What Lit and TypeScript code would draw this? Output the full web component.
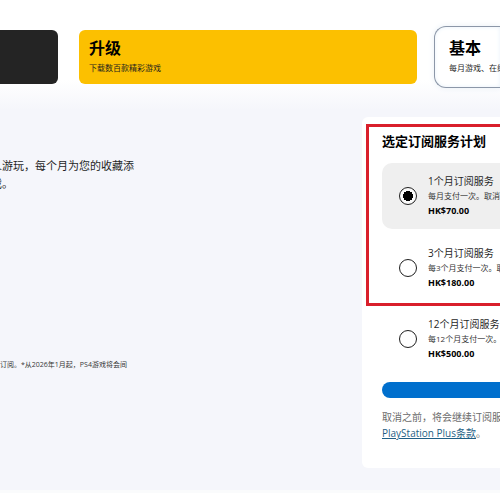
import { LitElement, html, css } from "lit";
import { customElement, property, state } from "lit/decorators.js";

interface Plan {
  id: string;
  title: string;
  note: string;
  price: string;
}

const PLANS: Plan[] = [
  { id: "m1", title: "1个月订阅服务", note: "每月支付一次。取消", price: "HK$70.00" },
  { id: "m3", title: "3个月订阅服务", note: "每3个月支付一次。取消", price: "HK$180.00" },
  { id: "m12", title: "12个月订阅服务", note: "每12个月支付一次。取消", price: "HK$500.00" },
];

@customElement("tier-card")
export class TierCard extends LitElement {
  @property() heading = "";
  @property() note = "";

  static styles = css`
    :host {
      display: block;
      box-sizing: border-box;
      height: 54px;
      padding: 8px 10px;
      border-radius: 6px;
      white-space: nowrap;
      overflow: hidden;
    }
    .heading {
      margin: 0;
      font-size: 16px;
      line-height: 20px;
      font-weight: 700;
      color: #000;
    }
    .note {
      margin: 0;
      padding-top: 2px;
      font-size: 8px;
      line-height: 16px;
      color: #1f1f1f;
    }
  `;

  render() {
    return html`<h2 class="heading">${this.heading}</h2>
      <p class="note">${this.note}</p>`;
  }
}

@customElement("plan-option")
export class PlanOption extends LitElement {
  @property({ attribute: false }) plan!: Plan;
  @property({ type: Boolean, reflect: true }) selected = false;

  static styles = css`
    :host {
      display: block;
      border-radius: 10px 0 0 10px;
    }
    :host([selected]) {
      background: #efefef;
    }
    .row {
      display: flex;
      align-items: center;
      gap: 11px;
      padding: 10px 0 10px 17px;
      white-space: nowrap;
      cursor: pointer;
    }
    .radio {
      appearance: none;
      flex: none;
      width: 18px;
      height: 18px;
      margin: 0;
      border: 1px solid #1f1f1f;
      border-radius: 50%;
      background: #fff;
    }
    .radio:checked {
      background: radial-gradient(circle, #000 5px, #fafafa 5px);
    }
    .text {
      display: flex;
      flex-direction: column;
    }
    .title {
      font-size: 10px;
      line-height: 16px;
      color: #1f1f1f;
    }
    .note {
      font-size: 8px;
      line-height: 14px;
      color: #363636;
    }
    .price {
      font-size: 9px;
      line-height: 16px;
      font-weight: 700;
      color: #000;
    }
  `;

  private pick() {
    this.dispatchEvent(new CustomEvent("pick", { detail: this.plan.id }));
  }

  render() {
    return html`<label class="row">
      <input class="radio" type="radio" name="plan" .checked=${this.selected} @change=${this.pick} />
      <span class="text">
        <span class="title">${this.plan.title}</span>
        <span class="note">${this.plan.note}</span>
        <span class="price">${this.plan.price}</span>
      </span>
    </label>`;
  }
}

@customElement("app-root")
export class AppRoot extends LitElement {
  @state() private chosen = "m1";

  static styles = css`
    :host {
      display: block;
      overflow: hidden;
      background: #fff;
      color: #1f1f1f;
      font-family: "Open Sans", "Noto Sans CJK SC", sans-serif;
    }
    .page {
      padding-top: 26px;
      background: linear-gradient(#fff 80px, #f5f6fb 110px);
      border-bottom: 3px solid #fafbfc;
    }
    .tiers {
      display: grid;
      grid-template-columns: 58px 1fr 66px;
      align-items: center;
    }
    .extra {
      border-radius: 0 6px 6px 0;
      background: #242424;
    }
    .upgrade {
      margin: 0 17px 0 21px;
      background: #fcc000;
    }
    .basic {
      height: 62px;
      padding: 11px 0 11px 14px;
      border: 1px solid #8c97a8;
      border-right: 0;
      border-radius: 12px 0 0 12px;
      background: #fff;
      box-shadow: inset 0 0 4px #e8f1f9, 0 0 6px #e8eff6;
    }
    .body {
      display: grid;
      grid-template-columns: 1fr 138px;
      padding: 29px 0 22px;
    }
    .intro {
      padding-top: 40px;
      white-space: nowrap;
    }
    .lead {
      margin: 0 0 0 -9px;
      font-size: 11px;
      line-height: 18px;
    }
    .legal {
      margin: 0;
      padding-top: 164px;
      font-size: 7px;
      line-height: 16px;
      color: #363636;
    }
    .panel {
      padding: 7px 0 27px 4px;
      border-radius: 6px 0 0 6px;
      background: #fff;
      white-space: nowrap;
    }
    .marked {
      padding: 5px 0 2px 13px;
      border: 3px solid #d91f2b;
      border-right: 0;
    }
    .heading {
      margin: 0 0 13px;
      font-size: 13px;
      line-height: 18px;
      font-weight: 700;
      color: #000;
    }
    .plans {
      display: grid;
      gap: 6px;
    }
    .rest {
      padding-left: 16px;
    }
    .buy {
      display: block;
      width: 100%;
      height: 16px;
      margin: 10px 0 11px;
      padding: 0;
      border: 0;
      border-radius: 8px 0 0 8px;
      background: #006fcd;
    }
    .terms {
      margin: 0;
      font-size: 10px;
      line-height: 16px;
      color: #6b6b6b;
    }
    .link {
      color: #1f5f85;
    }
  `;

  private option(plan: Plan) {
    return html`<plan-option
      .plan=${plan}
      ?selected=${this.chosen === plan.id}
      @pick=${(e: CustomEvent<string>) => (this.chosen = e.detail)}
    ></plan-option>`;
  }

  render() {
    return html`<main class="page" lang="zh-CN">
      <div class="tiers">
        <tier-card class="extra"></tier-card>
        <tier-card class="upgrade" heading="升级" note="下载数百款精彩游戏"></tier-card>
        <tier-card class="basic" heading="基本" note="每月游戏、在线多人游玩"></tier-card>
      </div>
      <div class="body">
        <div class="intro">
          <p class="lead">人游玩，每个月为您的收藏添<br />戏。</p>
          <p class="legal">订阅。*从2026年1月起，PS4游戏将会间</p>
        </div>
        <section class="panel">
          <div class="marked">
            <h2 class="heading">选定订阅服务计划</h2>
            <div class="plans">${PLANS.slice(0, 2).map((p) => this.option(p))}</div>
          </div>
          <div class="rest">
            ${this.option(PLANS[2])}
            <button class="buy" type="button" aria-label="订阅"></button>
            <p class="terms">取消之前，将会继续订阅服务<br /><a class="link" href="#terms">PlayStation Plus条款</a>。</p>
          </div>
        </section>
      </div>
    </main>`;
  }
}
